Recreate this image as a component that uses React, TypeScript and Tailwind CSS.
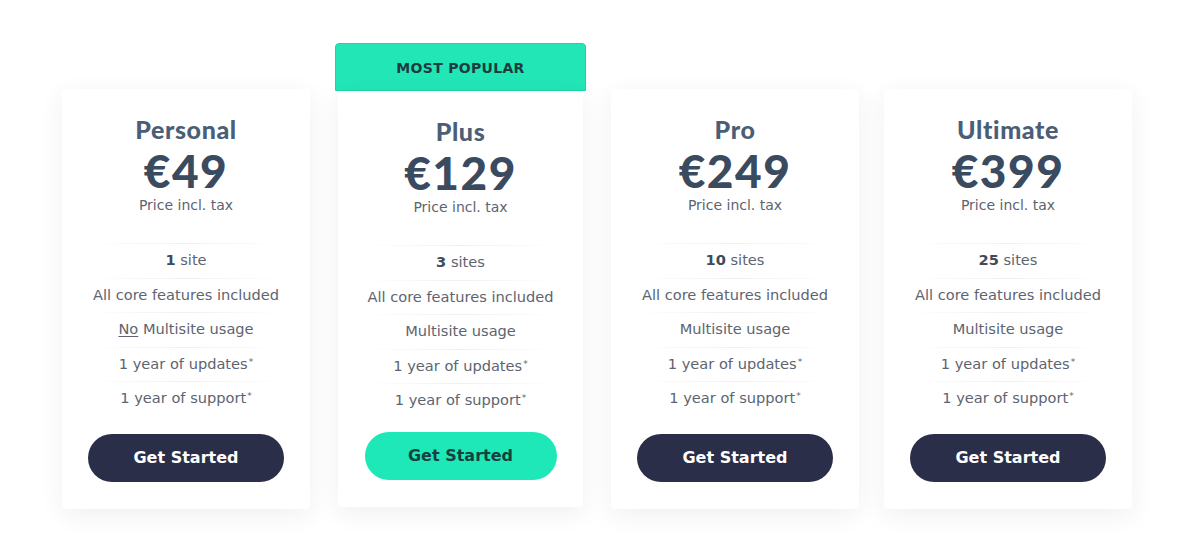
import React from "react";

type Plan = {
  name: string;
  price: string;
  sites: string;
  siteLabel: string;
  noMulti?: boolean;
  popular?: boolean;
};

const plans: Plan[] = [
  { name: "Personal", price: "€49", sites: "1", siteLabel: "site", noMulti: true },
  { name: "Plus", price: "€129", sites: "3", siteLabel: "sites", popular: true },
  { name: "Pro", price: "€249", sites: "10", siteLabel: "sites" },
  { name: "Ultimate", price: "€399", sites: "25", siteLabel: "sites" },
];

const body = { fontFamily: '"DejaVu Sans", Verdana, sans-serif' };
const head = { fontFamily: 'Lato, "Open Sans", sans-serif' };

function Star() {
  return <sup className="text-[9px] relative -top-[4px] ml-[1px]">*</sup>;
}

function Row({ children }: { children: React.ReactNode }) {
  return (
    <div className="relative h-[34.5px] shrink-0 flex items-center justify-center text-[14.6px] text-[#5d6470]">
      <div className="absolute top-0 left-0 right-0 h-px bg-gradient-to-r from-transparent via-[#eef0f3] to-transparent" />
      {children}
    </div>
  );
}

function Card({ plan }: { plan: Plan }) {
  return (
    <div
      className={`bg-white rounded-[4px] shadow-[0_6px_24px_rgba(30,40,60,0.07)] px-[26px] pt-[26px] flex flex-col items-center ${
        plan.popular ? "rounded-t-none w-[245px] mx-auto h-[416px]" : "w-[248px] h-[420px]"
      }`}
      style={body}
    >
      <div className="text-[25px] leading-[28px] font-black text-[#4b5e77] tracking-[0.6px]" style={head}>
        {plan.name}
      </div>
      <div className="text-[46px] leading-[44px] font-black text-[#3a4a5f] mt-[6px] tracking-[1.5px]" style={head}>
        {plan.price}
      </div>
      <div className="text-[14px] leading-[20px] text-[#5d6470] mt-[2px]">Price incl. tax</div>
      <div className="w-full mt-[28px]">
        <Row>
          <span>
            <b className="text-[#3f4a5a]">{plan.sites}</b> {plan.siteLabel}
          </span>
        </Row>
        <Row>All core features included</Row>
        <Row>
          {plan.noMulti ? (
            <span>
              <span className="underline underline-offset-2">No</span> Multisite usage
            </span>
          ) : (
            <span>Multisite usage</span>
          )}
        </Row>
        <Row>
          <span>
            1 year of updates
            <Star />
          </span>
        </Row>
        <Row>
          <span>
            1 year of support
            <Star />
          </span>
        </Row>
      </div>
      <button
        className={`shrink-0 h-[48px] rounded-full text-[16px] font-bold flex items-center justify-center ${
          plan.popular
            ? "mt-[14px] bg-[#1ee8b7] text-[#17403f] w-[192px]"
            : "mt-[18px] bg-[#2b2e48] text-white w-[196px]"
        }`}
        style={body}
      >
        Get Started
      </button>
    </div>
  );
}

export default function App() {
  return (
    <div className="w-[1200px] h-[550px] bg-white overflow-hidden">
      <div className="flex items-start gap-[25px] pl-[62px] pt-[89px]">
        {plans.map((p) =>
          p.popular ? (
            <div key={p.name} className="w-[251px] -mt-[46px] flex flex-col">
              <div
                className="h-[48px] bg-[#22e6b6] border border-[#1cd4a6] rounded-t-[4px] flex items-center justify-center text-[14px] font-bold text-[#1e3b3f] tracking-[0.3px] pt-[2px]"
                style={body}
              >
                MOST POPULAR
              </div>
              <Card plan={p} />
            </div>
          ) : (
            <Card key={p.name} plan={p} />
          )
        )}
      </div>
    </div>
  );
}
